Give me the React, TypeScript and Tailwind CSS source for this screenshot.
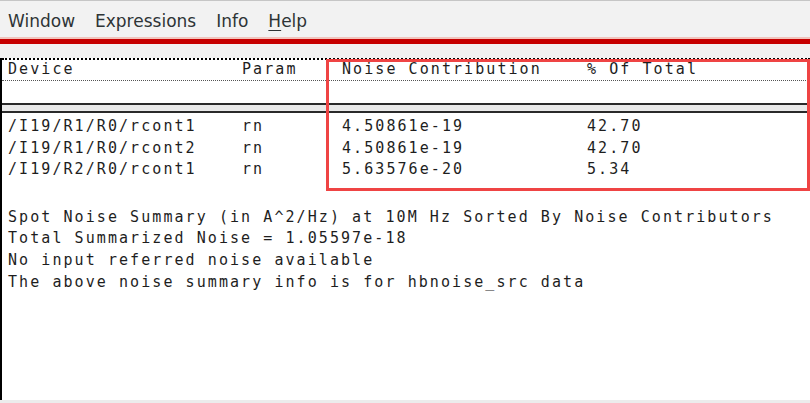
const rows = [
  { device: "/I19/R1/R0/rcont1", param: "rn", noise: "4.50861e-19", pct: "42.70" },
  { device: "/I19/R1/R0/rcont2", param: "rn", noise: "4.50861e-19", pct: "42.70" },
  { device: "/I19/R2/R0/rcont1", param: "rn", noise: "5.63576e-20", pct: "5.34" },
];

const summary = [
  "Spot Noise Summary (in A^2/Hz) at 10M Hz Sorted By Noise Contributors",
  "Total Summarized Noise = 1.05597e-18",
  "No input referred noise available",
  "The above noise summary info is for hbnoise_src data",
];

const mono = "font-['DejaVu_Sans_Mono',monospace] text-[15px] tracking-[2.07px] text-[#1e1e1e] whitespace-pre";
const cols = "grid grid-cols-[234px_100px_245px_1fr]";

function MenuBar() {
  return (
    <div className="flex h-[37px] gap-5 border-t border-[#c6c6c6] pl-2 pt-[10px] font-['DejaVu_Sans',sans-serif] text-[17px] leading-[20px] text-[#2e3436]">
      <span>Window</span>
      <span>Expressions</span>
      <span>Info</span>
      <span>
        <span className="underline decoration-1 underline-offset-[3px]">H</span>elp
      </span>
    </div>
  );
}

export default function App() {
  return (
    <div className="relative flex h-[403px] w-[810px] flex-col overflow-hidden bg-[#f2f2f2]">
      <MenuBar />
      <div className="h-[2px] bg-[#f1c4bd]" />
      <div className="h-[5px] bg-[#c60000]" />
      <div className="h-[14px]" />

      <div className="flex flex-1 flex-col border-l-2 border-black bg-white">
        {/* header box */}
        <div className="border-t-2 border-dotted border-black">
          <div className={`${cols} ${mono} pl-[6px] leading-[18px]`}>
            <span>Device</span>
            <span>Param</span>
            <span>Noise Contribution</span>
            <span>% Of Total</span>
          </div>
          <div className="mt-[2px] border-t border-dotted border-[#555]" />
          <div className="h-[22px]" />
        </div>
        <div className="h-[2px] bg-[#2a2a2a]" />
        <div className="h-[6px] bg-[#e9e9e9]" />
        <div className="h-[2px] bg-[#2a2a2a]" />

        <div className={`pt-[3px] pl-[6px] ${mono} leading-[21.6px]`}>
          {rows.map((r) => (
            <div key={r.device + r.noise} className={cols}>
              <span>{r.device}</span>
              <span>{r.param}</span>
              <span>{r.noise}</span>
              <span>{r.pct}</span>
            </div>
          ))}
        </div>

        <div className={`mt-[26px] pl-[6px] ${mono} leading-[21.6px]`}>
          {summary.map((line) => (
            <div key={line}>{line}</div>
          ))}
        </div>
      </div>
      <div className="h-[3px] bg-[#ececec]" />

      {/* annotation overlay */}
      <div className="absolute left-[326px] top-[59px] h-[132px] w-[484px] border-[3px] border-[#ef4444]" />
    </div>
  );
}
